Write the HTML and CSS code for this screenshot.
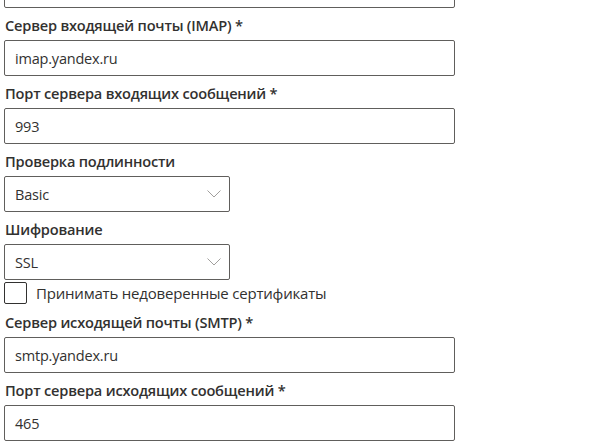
FILE: index.html
```html
<!DOCTYPE html>
<html lang="ru">
<head>
<meta charset="utf-8">
<title>Настройки почты</title>
<link rel="stylesheet" href="styles.css">
</head>
<body>
<div class="form">
  <div class="field">
    <div class="input"></div>
  </div>
  <div class="field">
    <label class="label">Сервер входящей почты (IMAP) *</label>
    <div class="input">imap.yandex.ru</div>
  </div>
  <div class="field">
    <label class="label">Порт сервера входящих сообщений *</label>
    <div class="input">993</div>
  </div>
  <div class="field">
    <label class="label">Проверка подлинности</label>
    <div class="input dropdown"><span>Basic</span>
      <svg class="chev" width="14" height="8" viewBox="0 0 14 8"><polyline points="0.5,0.5 7,7 13.5,0.5" fill="none" stroke="#a19f9d" stroke-width="1"/></svg>
    </div>
  </div>
  <div class="field">
    <label class="label">Шифрование</label>
    <div class="input dropdown"><span>SSL</span>
      <svg class="chev" width="14" height="8" viewBox="0 0 14 8"><polyline points="0.5,0.5 7,7 13.5,0.5" fill="none" stroke="#a19f9d" stroke-width="1"/></svg>
    </div>
  </div>
  <div class="check">
    <span class="box"></span>
    <span class="check-text">Принимать недоверенные сертификаты</span>
  </div>
  <div class="field">
    <label class="label">Сервер исходящей почты (SMTP) *</label>
    <div class="input">smtp.yandex.ru</div>
  </div>
  <div class="field">
    <label class="label">Порт сервера исходящих сообщений *</label>
    <div class="input">465</div>
  </div>
</div>
</body>
</html>
```
FILE: styles.css
```css
html, body {
  margin: 0;
  padding: 0;
  background: #ffffff;
}
body {
  font-family: "Open Sans", "Noto Sans", sans-serif;
  color: #323130;
  font-size: 15px;
}
.form {
  margin-top: -28px;
  padding-left: 4px;
  width: 451px;
  display: flex;
  flex-direction: column;
}
.field {
  display: flex;
  flex-direction: column;
}
.label {
  font-weight: 600;
  font-size: 14.6px;
  line-height: 22px;
  padding: 6px 1px 4px;
  letter-spacing: -0.2px;
}
.input {
  box-sizing: border-box;
  height: 36px;
  border: 1px solid #605e5c;
  border-radius: 2px;
  padding: 0 10px;
  display: flex;
  align-items: center;
  font-size: 14.5px;
  letter-spacing: -0.2px;
}
.dropdown {
  width: 226px;
  justify-content: space-between;
  padding-right: 8px;
}
.chev {
  display: block;
}
.check {
  display: flex;
  align-items: center;
  gap: 9px;
  margin-top: 2px;
  height: 22px;
  margin-bottom: 1px;
}
.box {
  box-sizing: border-box;
  width: 23px;
  height: 22px;
  border: 1px solid #323130;
  border-radius: 2px;
}
.check-text {
  font-size: 15px;
  letter-spacing: -0.2px;
}
```
